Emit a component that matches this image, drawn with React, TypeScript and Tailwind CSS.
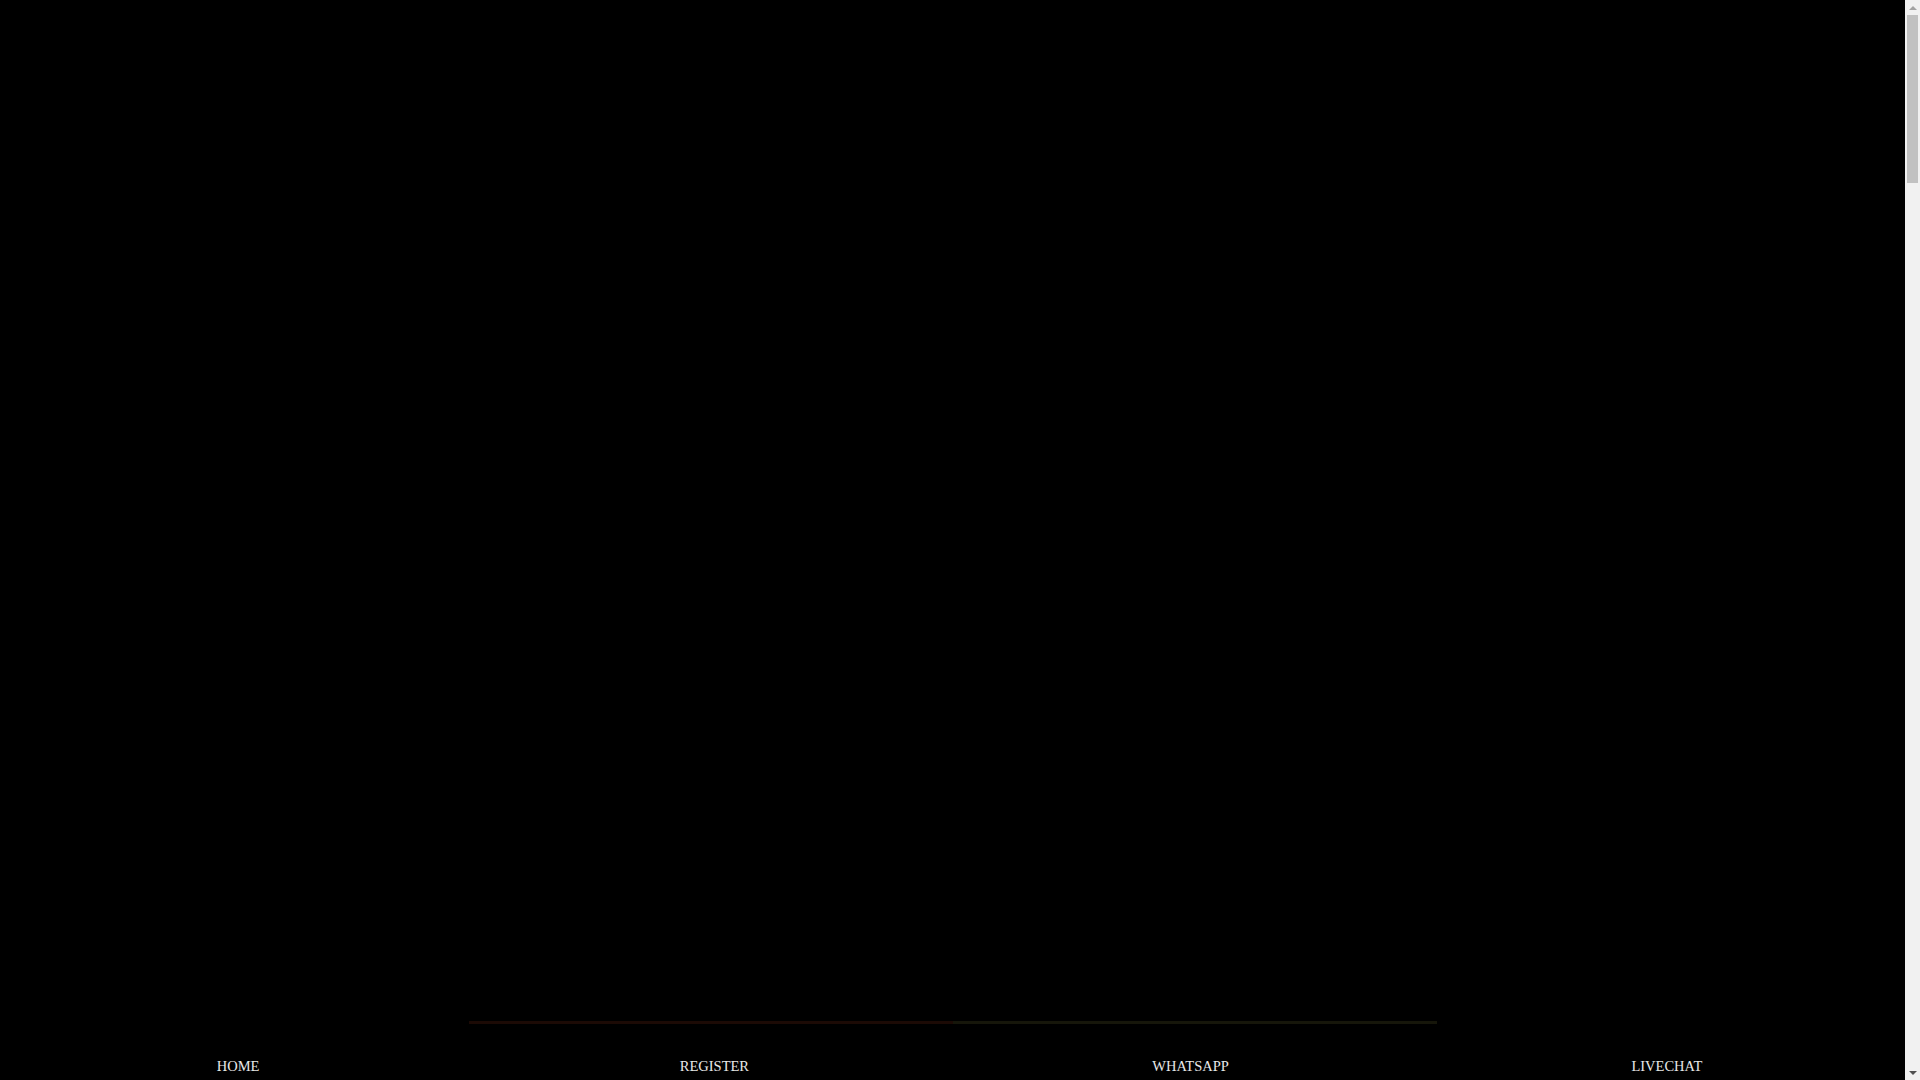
const navItems = ['HOME', 'REGISTER', 'WHATSAPP', 'LIVECHAT']

function Scrollbar() {
  return (
    <aside className="flex h-screen w-[15px] shrink-0 flex-col items-center bg-[#f1f1f1]">
      <div className="flex h-[15px] w-full items-center justify-center">
        <span className="h-0 w-0 border-x-[4px] border-b-[4px] border-x-transparent border-b-[#a3a3a3]" />
      </div>
      <div className="h-[168px] w-[11px] shrink-0 bg-[#c1c1c1]" />
      <div className="flex-1" />
      <div className="flex h-[15px] w-full items-center justify-center">
        <span className="h-0 w-0 border-x-[4px] border-t-[4px] border-x-transparent border-t-[#505050]" />
      </div>
    </aside>
  )
}

export default function App() {
  return (
    <div
      className="flex h-screen overflow-hidden bg-black"
      style={{ fontFamily: '"Liberation Serif", "Times New Roman", serif' }}
    >
      <main className="flex min-w-0 flex-1 flex-col">
        {/* banner area, images never loaded */}
        <div className="h-[1021px] shrink-0" />
        <div className="flex justify-center">
          <div className="flex h-[3px] w-[968px]">
            <div className="flex-1 bg-[#1c0a05]" />
            <div className="flex-1 bg-[#16160a]" />
          </div>
        </div>
        <div className="flex-1" />
        <nav className="grid grid-cols-4 bg-black">
          {navItems.map(item => (
            <a
              key={item}
              href="#"
              className="flex h-[21px] items-start justify-center text-[14.5px] leading-none text-[#e8e8e8]"
            >
              {item}
            </a>
          ))}
        </nav>
      </main>
      <Scrollbar />
    </div>
  )
}
